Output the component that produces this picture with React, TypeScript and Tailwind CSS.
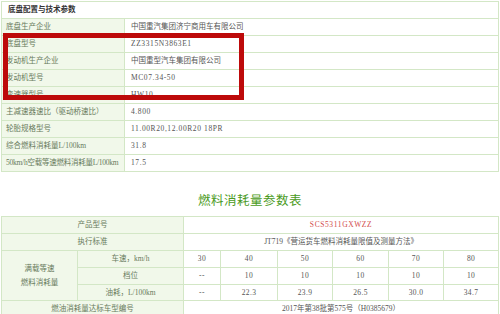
const chassis: [string, string][] = [
  ['底盘生产企业', '中国重汽集团济宁商用车有限公司'],
  ['底盘型号', 'ZZ3315N3863E1'],
  ['发动机生产企业', '中国重型汽车集团有限公司'],
  ['发动机型号', 'MC07.34-50'],
  ['变速器型号', 'HW10'],
  ['主减速器速比（驱动桥速比）', '4.800'],
  ['轮胎规格型号', '11.00R20,12.00R20 18PR'],
  ['综合燃料消耗量L/100km', '31.8'],
  ['50km/h空载等速燃料消耗量L/100km', '17.5'],
];

const speeds = ['30', '40', '50', '60', '70', '80'];
const gears = ['--', '10', '10', '10', '10', '10'];
const fuel = ['--', '22.3', '23.9', '26.5', '30.0', '34.7'];

const bd = 'border border-[#d3e7c6]';
const label = `${bd} bg-[#f1f8ea] text-[#687a5c]`;
const val = `${bd} bg-white text-[#555]`;

// latin-only values are set a little wider, like the old song font
const isLatin = (s: string) => !/[\u4e00-\u9fff]/.test(s);

export default function App() {
  return (
    <div className="relative w-[500px] h-[314px] overflow-hidden bg-white font-['Liberation_Serif','Noto_Sans_CJK_SC',serif] text-[7.5px] leading-none">
      <table className="ml-px mt-px w-[498px] table-fixed">
        <colgroup>
          <col className="w-[123px]" />
          <col />
        </colgroup>
        <tbody>
          <tr className="h-[17px]">
            <td colSpan={2} className={`${bd} bg-white pl-[6px] font-bold text-[#333]`}>
              底盘配置与技术参数
            </td>
          </tr>
          {chassis.map(([k, v], i) => (
            <tr key={k} className="h-[17px]">
              <td
                className={`${label} pl-[4px] whitespace-nowrap ${i === chassis.length - 1 ? 'pl-[3px] tracking-[-0.25px]' : ''}`}
              >
                {k}
              </td>
              <td className={`${val} pl-[6px] ${isLatin(v) ? 'tracking-[0.6px]' : ''}`}>{v}</td>
            </tr>
          ))}
        </tbody>
      </table>

      {/* highlight box drawn over the chassis rows */}
      <div className="absolute left-[3px] top-[33px] w-[241px] h-[67px] border-[5px] border-[#bd0a0a]" />

      <h2 className="mt-[20px] mb-[8px] h-[16px] text-center text-[12.5px] leading-[16px] text-[#4a9a22] font-['Noto_Sans_CJK_SC',sans-serif] font-normal tracking-[0.5px]">
        燃料消耗量参数表
      </h2>

      <table className="ml-px w-[497px] table-fixed text-center">
        <colgroup>
          <col className="w-[76px]" />
          <col className="w-[106px]" />
          <col className="w-[37px]" />
          <col className="w-[57px]" />
          <col className="w-[55px]" />
          <col className="w-[56px]" />
          <col className="w-[55px]" />
          <col className="w-[55px]" />
        </colgroup>
        <tbody>
          <tr className="h-[17px]">
            <td colSpan={2} className={label}>产品型号</td>
            <td colSpan={6} className={`${val} text-[#d24a4a] tracking-[0.6px]`}>SCS5311GXWZZ</td>
          </tr>
          <tr className="h-[17px]">
            <td colSpan={2} className={label}>执行标准</td>
            <td colSpan={6} className={val}>JT719《营运货车燃料消耗量限值及测量方法》</td>
          </tr>
          <tr className="h-[17px]">
            <td rowSpan={3} className={`${label} leading-[14px]`}>
              满载等速
              <br />
              燃料消耗量
            </td>
            <td className={label}>车速，km/h</td>
            {speeds.map((s, i) => (
              <td key={i} className={`${val} tracking-[0.4px]`}>{s}</td>
            ))}
          </tr>
          <tr className="h-[17px]">
            <td className={label}>档位</td>
            {gears.map((s, i) => (
              <td key={i} className={`${val} tracking-[0.4px]`}>{s}</td>
            ))}
          </tr>
          <tr className="h-[16px]">
            <td className={label}>油耗，L/100km</td>
            {fuel.map((s, i) => (
              <td key={i} className={`${val} tracking-[0.4px]`}>{s}</td>
            ))}
          </tr>
          <tr className="h-[17px]">
            <td colSpan={2} className={label}>燃油消耗量达标车型编号</td>
            <td colSpan={6} className={val}>2017年第38批第575号（H0385679）</td>
          </tr>
        </tbody>
      </table>
    </div>
  );
}
